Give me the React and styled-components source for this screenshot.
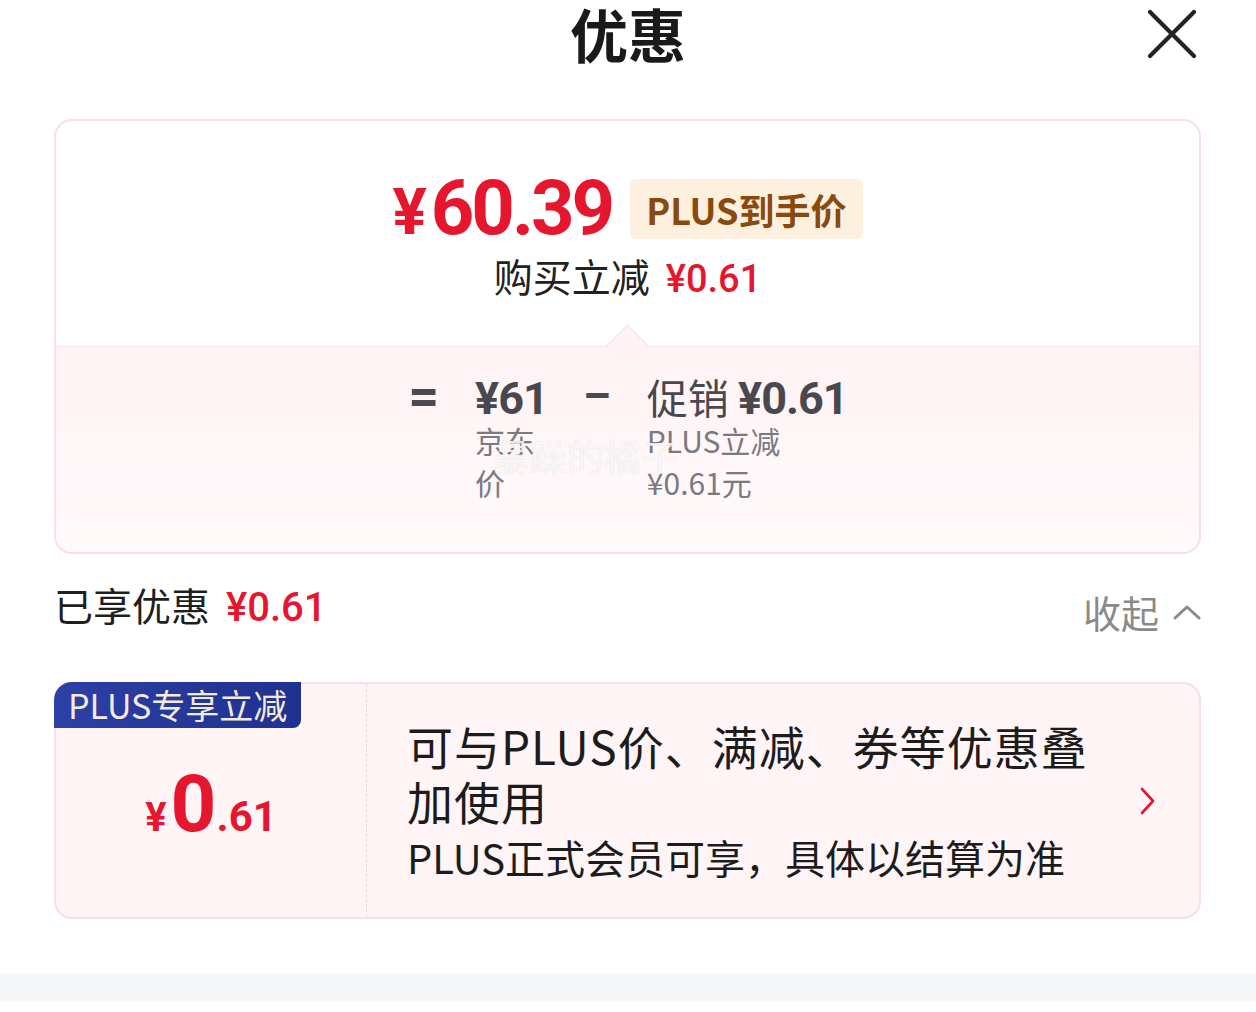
import React from 'react';
import styled, { createGlobalStyle } from 'styled-components';

const red = '#e5162e';
const cjk = '"Noto Sans CJK SC", "Noto Sans", sans-serif';
const num = 'Roboto, "Noto Sans", sans-serif';

const GlobalStyle = createGlobalStyle`
  body {
    margin: 0;
    background: #fff;
    font-family: ${cjk};
    color: #1f1f1f;
  }
`;

const Page = styled.div`
  display: flex;
  flex-direction: column;
  width: 1256px;
`;

const Header = styled.header`
  display: grid;
  grid-template-columns: 1fr auto 1fr;
  height: 72px;
`;

const Title = styled.h1`
  grid-column: 2;
  margin: 0;
  font-size: 58px;
  line-height: 66px;
  font-weight: 700;
  color: #1a1a1a;
`;

const CloseButton = styled.button`
  grid-column: 3;
  justify-self: end;
  align-self: start;
  margin: 8px 58px 0 0;
  padding: 0;
  border: 0;
  background: none;
  width: 52px;
  height: 52px;
`;

const Content = styled.main`
  display: flex;
  flex-direction: column;
  padding: 0 55px 0 54px;
  margin-top: 47px;
`;

const PriceCard = styled.section`
  border: 2px solid #f9dfe5;
  border-radius: 18px;
  overflow: hidden;
`;

const TopPart = styled.div`
  display: flex;
  flex-direction: column;
  align-items: center;
  padding: 47px 0 51px;
  background: #fff;
`;

const PriceRow = styled.div`
  display: flex;
  align-items: center;
  height: 80px;
  gap: 18px;
`;

const BigPrice = styled.span`
  display: flex;
  align-items: baseline;
  height: 80px;
  color: ${red};
  font-family: ${num};
  font-weight: 700;
  font-size: 76px;
  line-height: 80px;
  letter-spacing: -3px;
`;

const Yen = styled.span`
  font-size: ${(p) => p.size || 64}px;
  margin-right: 4px;
  letter-spacing: 0;
`;

const PlusTag = styled.span`
  background: #fdf0df;
  color: #8a4a0e;
  font-weight: 700;
  font-size: 36px;
  line-height: 60px;
  height: 60px;
  padding: 0 16px;
  border-radius: 6px;
  margin-top: 2px;
`;

const SubLine = styled.div`
  margin-top: 7px;
  height: 40px;
  font-size: 39px;
  line-height: 40px;
  color: #222;
  display: flex;
  align-items: baseline;
  gap: 16px;
`;

const RedNum = styled.span`
  color: ${red};
  font-family: ${num};
  font-weight: 500;
  font-size: ${(p) => p.size || 38}px;
`;

const BottomPart = styled.div`
  position: relative;
  display: flex;
  justify-content: center;
  align-items: flex-start;
  gap: 36px;
  padding: 26px 0 49px;
  border-top: 1px solid #fbe5e9;
  background: linear-gradient(#fff3f5, #fffafb);

  &::before {
    content: '';
    position: absolute;
    top: -16px;
    left: calc(50% - 16px);
    width: 30px;
    height: 30px;
    background: #fff3f5;
    border-top: 1px solid #f9dde3;
    border-left: 1px solid #f9dde3;
    transform: rotate(45deg);
  }
`;

const Operator = styled.span`
  font-family: ${num};
  font-size: ${(p) => p.size || 44}px;
  line-height: 46px;
  font-weight: 700;
  color: #4a4a50;
`;

const Term = styled.div`
  display: flex;
  flex-direction: column;
  width: ${(p) => p.width}px;
`;

const TermValue = styled.span`
  height: 46px;
  font-size: 41px;
  line-height: 46px;
  color: #48484e;
  white-space: nowrap;
`;

const TermNum = styled.span`
  font-family: ${num};
  font-weight: 700;
  font-size: 45px;
  letter-spacing: -1px;
`;

const TermLabel = styled.span`
  font-size: 30px;
  line-height: 42px;
  color: #7a7a80;
`;

const Watermark = styled.span`
  position: absolute;
  left: 437px;
  top: 82px;
  font-size: 37px;
  color: rgba(255, 255, 255, 0.85);
  text-shadow: 0 0 1px rgba(0, 0, 0, 0.18);
  pointer-events: none;
`;

const SavedRow = styled.div`
  display: flex;
  justify-content: space-between;
  align-items: flex-start;
  margin-top: 25px;
`;

const SavedText = styled.div`
  display: flex;
  align-items: baseline;
  gap: 16px;
  height: 50px;
  font-size: 39px;
  line-height: 50px;
  color: #1f1f1f;
`;

const Collapse = styled.button`
  display: flex;
  align-items: center;
  gap: 14px;
  height: 50px;
  margin-top: 8px;
  padding: 0;
  border: 0;
  background: none;
  font-family: ${cjk};
  font-size: 38px;
  line-height: 50px;
  color: #8a8a8a;
`;

const CouponCard = styled.section`
  position: relative;
  display: flex;
  margin-top: 45px;
  height: 237px;
  box-sizing: border-box;
  border: 2px solid #f9dfe5;
  border-radius: 18px;
  background: #fff5f6;
`;

const CouponBadge = styled.span`
  position: absolute;
  top: -2px;
  left: -2px;
  padding: 0 14px;
  height: 46px;
  line-height: 46px;
  font-size: 34px;
  color: #f4ead9;
  background: linear-gradient(90deg, #2c40a6, #1f3190);
  border-radius: 18px 0 8px 0;
`;

const CouponAmount = styled.div`
  display: flex;
  align-items: center;
  justify-content: center;
  width: 310px;
  flex-shrink: 0;
  border-right: 1px dashed #ead8dc;
  padding-top: 6px;
`;

const AmountValue = styled.span`
  display: flex;
  align-items: baseline;
  color: ${red};
  font-family: ${num};
  font-weight: 700;
`;

const AmountPart = styled.span`
  font-size: ${(p) => p.size}px;
  margin-left: ${(p) => p.gap || 0}px;
`;

const CouponInfo = styled.div`
  flex: 1;
  display: flex;
  align-items: center;
  padding: 0 44px 0 40px;
`;

const InfoText = styled.div`
  flex: 1;
  display: flex;
  flex-direction: column;
`;

const InfoTitle = styled.div`
  width: 690px;
  font-size: 46px;
  line-height: 55px;
  letter-spacing: 1px;
  color: #1c1c1c;
`;

const InfoNote = styled.div`
  margin-top: 3px;
  font-size: 40px;
  line-height: 53px;
  color: #1c1c1c;
`;

const Footer = styled.div`
  margin-top: 54px;
  height: 28px;
  background: #f6f7f9;
`;

function CloseIcon() {
  return (
    <svg width="52" height="52" viewBox="0 0 52 52">
      <path d="M4 4 L48 48 M48 4 L4 48" stroke="#222" strokeWidth="4.2" strokeLinecap="round" fill="none" />
    </svg>
  );
}

function ChevronUp() {
  return (
    <svg width="28" height="16" viewBox="0 0 28 16">
      <path d="M2 14 L14 3 L26 14" stroke="#8a8a8a" strokeWidth="3" strokeLinecap="round" strokeLinejoin="round" fill="none" />
    </svg>
  );
}

function ChevronRight() {
  return (
    <svg width="16" height="28" viewBox="0 0 16 28">
      <path d="M3 2 L14 14 L3 26" stroke={red} strokeWidth="2.6" strokeLinecap="round" strokeLinejoin="round" fill="none" />
    </svg>
  );
}

export default function App() {
  return (
    <Page>
      <GlobalStyle />
      <Header>
        <Title>优惠</Title>
        <CloseButton aria-label="关闭">
          <CloseIcon />
        </CloseButton>
      </Header>
      <Content>
        <PriceCard>
          <TopPart>
            <PriceRow>
              <BigPrice>
                <Yen>¥</Yen>60.39
              </BigPrice>
              <PlusTag>PLUS到手价</PlusTag>
            </PriceRow>
            <SubLine>
              购买立减
              <RedNum>¥0.61</RedNum>
            </SubLine>
          </TopPart>
          <BottomPart>
            <Operator size={54}>=</Operator>
            <Term width={72}>
              <TermValue>
                <TermNum>¥61</TermNum>
              </TermValue>
              <TermLabel>京东价</TermLabel>
            </Term>
            <Operator>–</Operator>
            <Term width={200}>
              <TermValue>
                促销 <TermNum>¥0.61</TermNum>
              </TermValue>
              <TermLabel>PLUS立减 ¥0.61元</TermLabel>
            </Term>
            <Watermark>暴躁的橘子</Watermark>
          </BottomPart>
        </PriceCard>

        <SavedRow>
          <SavedText>
            已享优惠
            <RedNum size={40}>¥0.61</RedNum>
          </SavedText>
          <Collapse>
            收起
            <ChevronUp />
          </Collapse>
        </SavedRow>

        <CouponCard>
          <CouponBadge>PLUS专享立减</CouponBadge>
          <CouponAmount>
            <AmountValue>
              <AmountPart size={40}>¥</AmountPart>
              <AmountPart size={80} gap={4}>0</AmountPart>
              <AmountPart size={42}>.61</AmountPart>
            </AmountValue>
          </CouponAmount>
          <CouponInfo>
            <InfoText>
              <InfoTitle>可与PLUS价、满减、券等优惠叠加使用</InfoTitle>
              <InfoNote>PLUS正式会员可享，具体以结算为准</InfoNote>
            </InfoText>
            <ChevronRight />
          </CouponInfo>
        </CouponCard>
      </Content>
      <Footer />
    </Page>
  );
}
